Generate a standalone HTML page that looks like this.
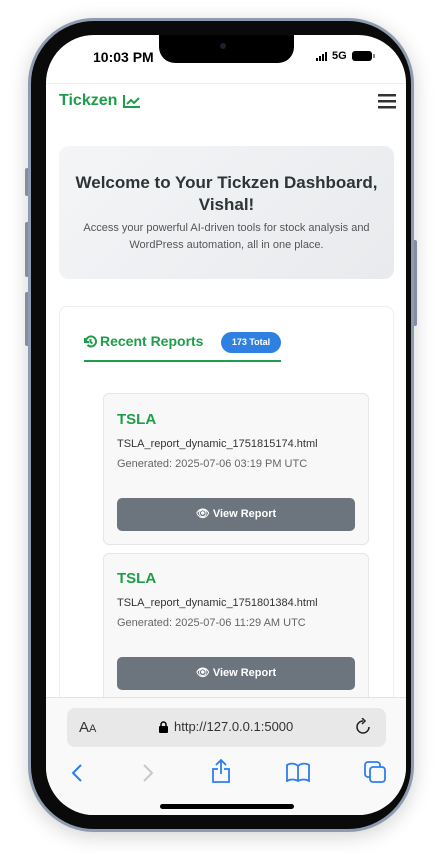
<!DOCTYPE html>
<html><head><style>
*{margin:0;padding:0;box-sizing:border-box}
body{width:442px;height:853px;background:#fff;position:relative;overflow:hidden;font-family:"Liberation Sans",sans-serif}
.abs{position:absolute}
.frame{left:28px;top:18px;width:386px;height:814px;border-radius:66px;background:#0a0a0a;border:3px solid #8e9bb0;box-shadow:0 4px 20px rgba(0,0,0,.18)}
.screen{left:46px;top:35px;width:360px;height:780px;border-radius:48px;background:#fff;overflow:hidden}
.btn{background:#8e9bb0;border-radius:2px;width:4px}
.green{color:#1e9e4a}
</style></head><body>
<div class="abs btn" style="left:25px;top:168px;height:28px"></div>
<div class="abs btn" style="left:25px;top:222px;height:55px"></div>
<div class="abs btn" style="left:25px;top:292px;height:54px"></div>
<div class="abs btn" style="left:413px;top:240px;height:86px"></div>
<div class="abs frame"></div>
<div class="abs screen">
  <div class="abs" style="left:47px;top:14px;font-weight:bold;font-size:14px;color:#000">10:03 PM</div>
  <div class="abs" style="left:113px;top:0;width:135px;height:28px;background:#000;border-radius:0 0 16px 16px"></div>
  <div class="abs" style="left:174px;top:8px;width:6px;height:6px;border-radius:3px;background:#1a2030"></div>
  <svg class="abs" style="left:270px;top:17px" width="14" height="9"><rect x="0" y="6" width="2" height="3"/><rect x="3" y="4" width="2" height="5"/><rect x="6" y="2" width="2" height="7"/><rect x="9" y="0" width="2" height="9"/></svg>
  <div class="abs" style="left:286px;top:15px;font-size:11px;font-weight:bold">5G</div>
  <div class="abs" style="left:306px;top:16px;width:20px;height:10px;border-radius:3px;background:#000"></div>
  <div class="abs" style="left:327px;top:19px;width:2px;height:4px;background:#888"></div>
  <div class="abs" style="left:0;top:48px;width:360px;height:1px;background:#eee"></div>
  <div class="abs green" style="left:13px;top:57px;font-size:16px;font-weight:bold">Tickzen</div>
  <svg class="abs" style="left:77px;top:60px" width="17" height="13" fill="none" stroke="#1e9e4a" stroke-width="2"><path d="M1 0V12H17M4 9l4-4 3 3 5-5"/></svg>
  <svg class="abs" style="left:332px;top:59px" width="18" height="15"><rect y="0" width="18" height="2.5" fill="#333"/><rect y="6" width="18" height="2.5" fill="#333"/><rect y="12" width="18" height="2.5" fill="#333"/></svg>
  <div class="abs" style="left:13px;top:111px;width:335px;height:133px;border-radius:10px;background:linear-gradient(135deg,#f4f5f7,#e8eaed);text-align:center">
    <div style="margin-top:26px;font-size:17px;font-weight:bold;color:#2d3436;line-height:22px">Welcome to Your Tickzen Dashboard,<br>Vishal!</div>
    <div style="margin-top:4px;font-size:11px;color:#555;line-height:17px">Access your powerful AI-driven tools for stock analysis and<br>WordPress automation, all in one place.</div>
  </div>
  <div class="abs" style="left:13px;top:271px;width:335px;height:420px;border:1px solid #eee;border-radius:8px;background:#fff"></div>
  <svg class="abs" style="left:38px;top:300px" width="13" height="13" fill="none" stroke="#1e9e4a" stroke-width="2"><path d="M2 6.5A5 5 0 1 1 3.5 10M1 3v4h4M6.5 4v3l2 1.5"/></svg>
  <div class="abs green" style="left:54px;top:298px;font-size:14px;font-weight:bold">Recent Reports</div>
  <div class="abs" style="left:175px;top:297px;width:60px;height:21px;border-radius:11px;background:#2f80e0;color:#fff;font-size:9px;font-weight:bold;text-align:center;line-height:21px">173 Total</div>
  <div class="abs" style="left:38px;top:325px;width:197px;height:2px;background:#1e9e4a"></div>

  <div class="abs" style="left:57px;top:358px;width:266px;height:152px;background:#f8f8f8;border:1px solid #e6e6e6;border-radius:6px"></div>
  <div class="abs green" style="left:71px;top:376px;font-size:15px;font-weight:bold">TSLA</div>
  <div class="abs" style="left:71px;top:403px;font-size:11px;color:#333">TSLA_report_dynamic_1751815174.html</div>
  <div class="abs" style="left:71px;top:423px;font-size:11px;color:#666">Generated: 2025-07-06 03:19 PM UTC</div>
  <div class="abs" style="left:71px;top:463px;width:238px;height:33px;background:#6c757d;border-radius:5px;color:#fff;font-size:11px;font-weight:bold;text-align:center;line-height:33px">&#128065;&#xFE0E; View Report</div>

  <div class="abs" style="left:57px;top:518px;width:266px;height:152px;background:#f8f8f8;border:1px solid #e6e6e6;border-radius:6px"></div>
  <div class="abs green" style="left:71px;top:535px;font-size:15px;font-weight:bold">TSLA</div>
  <div class="abs" style="left:71px;top:562px;font-size:11px;color:#333">TSLA_report_dynamic_1751801384.html</div>
  <div class="abs" style="left:71px;top:582px;font-size:11px;color:#666">Generated: 2025-07-06 11:29 AM UTC</div>
  <div class="abs" style="left:71px;top:622px;width:238px;height:33px;background:#6c757d;border-radius:5px;color:#fff;font-size:11px;font-weight:bold;text-align:center;line-height:33px">&#128065;&#xFE0E; View Report</div>

  <div class="abs" style="left:0;top:662px;width:360px;height:118px;background:#f9f9f9;border-top:1px solid #e2e2e2"></div>
  <div class="abs" style="left:21px;top:673px;width:319px;height:39px;background:#e8e8e8;border-radius:8px"></div>
  <div class="abs" style="left:33px;top:684px;font-size:15px;color:#333">A<span style="font-size:11px">A</span></div>
  <svg class="abs" style="left:113px;top:686px" width="9" height="12"><path d="M2 5V3.5a2.5 2.5 0 0 1 5 0V5" stroke="#000" stroke-width="1.5" fill="none"/><rect x="0" y="5" width="9" height="7" rx="1"/></svg>
  <div class="abs" style="left:128px;top:684px;font-size:13px;color:#333">http://127.0.0.1:5000</div>
  <svg class="abs" style="left:309px;top:683px" width="16" height="17" fill="none" stroke="#222" stroke-width="1.5"><path d="M8 3a6 6 0 1 0 6 6M7 0l3 3-3 3"/></svg>
  <svg class="abs" style="left:25px;top:729px" width="12" height="18" fill="none" stroke="#2b7ff0" stroke-width="2"><path d="M10 1L2 9l8 8"/></svg>
  <svg class="abs" style="left:96px;top:729px" width="12" height="18" fill="none" stroke="#c8c8c8" stroke-width="2"><path d="M2 1l8 8-8 8"/></svg>
  <svg class="abs" style="left:166px;top:724px" width="18" height="24" fill="none" stroke="#2b7ff0" stroke-width="1.8"><path d="M9 15V1M4 6l5-5 5 5M6 10H1v13h16V10h-5"/></svg>
  <svg class="abs" style="left:240px;top:727px" width="24" height="20" fill="none" stroke="#2b7ff0" stroke-width="1.8"><path d="M12 4C9 1 4 1 1 3v16c3-2 8-2 11 0 3-2 8-2 11 0V3c-3-2-8-2-11 1zM12 4v15"/></svg>
  <svg class="abs" style="left:318px;top:726px" width="22" height="22" fill="none" stroke="#2b7ff0" stroke-width="1.8"><rect x="1" y="1" width="15" height="15" rx="3"/><rect x="6" y="6" width="15" height="15" rx="3" fill="#f9f9f9"/></svg>
  <div class="abs" style="left:114px;top:769px;width:134px;height:5px;border-radius:3px;background:#000"></div>
</div>
</body></html>
